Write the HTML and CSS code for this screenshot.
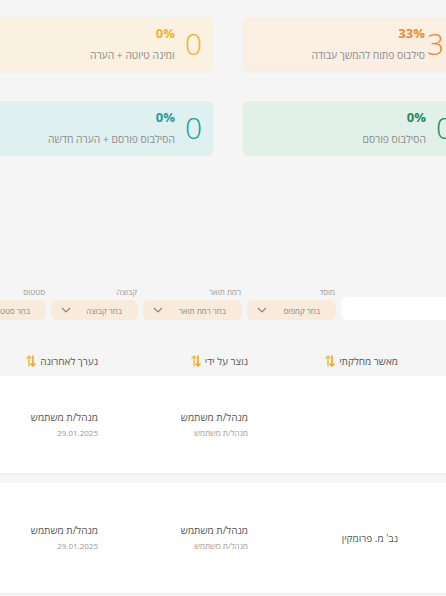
FILE: index.html
```html
<!DOCTYPE html>
<html lang="he" dir="rtl">
<head>
  <meta charset="UTF-8" />
  <meta name="viewport" content="width=device-width, initial-scale=1.0"/>
  <title>סילבוסים</title>
  <link rel="stylesheet" href="styles.css">
</head>
<body>

  <div class="page">

    <!-- Status cards -->
    <div class="cards">
      <div class="card orange">
        <div class="count">3</div>
        <div class="info">
          <div class="percent">33%</div>
          <div class="caption">סילבוס פתוח להמשך עבודה</div>
        </div>
      </div>
      <div class="card amber">
        <div class="count">0</div>
        <div class="info">
          <div class="percent">0%</div>
          <div class="caption">ומינה טיוטה + הערה</div>
        </div>
      </div>
      <div class="card green">
        <div class="count">0</div>
        <div class="info">
          <div class="percent">0%</div>
          <div class="caption">הסילבוס פורסם</div>
        </div>
      </div>
      <div class="card teal">
        <div class="count">0</div>
        <div class="info">
          <div class="percent">0%</div>
          <div class="caption">הסילבוס פורסם + הערה חדשה</div>
        </div>
      </div>
    </div>

    <!-- Filters -->
    <div class="filters">
      <input type="text" class="search" />
      <div class="filter">
        <label>מוסד</label>
        <div class="select w88"><span>בחר קמפוס</span><svg width="10" height="6" viewBox="0 0 10 6"><polyline points="1,1 5,5 9,1" /></svg></div>
      </div>
      <div class="filter">
        <label>רמת תואר</label>
        <div class="select w99"><span>בחר רמת תואר</span><svg width="10" height="6" viewBox="0 0 10 6"><polyline points="1,1 5,5 9,1" /></svg></div>
      </div>
      <div class="filter">
        <label>קבוצה</label>
        <div class="select w87"><span>בחר קבוצה</span><svg width="10" height="6" viewBox="0 0 10 6"><polyline points="1,1 5,5 9,1" /></svg></div>
      </div>
      <div class="filter">
        <label>סטטוס</label>
        <div class="select w87"><span>בחר סטטוס</span><svg width="10" height="6" viewBox="0 0 10 6"><polyline points="1,1 5,5 9,1" /></svg></div>
      </div>
    </div>

    <!-- Syllabus table -->
    <div class="table">
      <div class="thead">
        <div class="th">מאשר מחלקתי <svg class="sort" width="10" height="12" viewBox="0 0 10 12"><path d="M3 11V1M1 3l2-2 2 2" class="up"/><path d="M7 1v10M5 9l2 2 2-2" class="down"/></svg></div>
        <div class="th">נוצר על ידי <svg class="sort" width="10" height="12" viewBox="0 0 10 12"><path d="M3 11V1M1 3l2-2 2 2" class="up"/><path d="M7 1v10M5 9l2 2 2-2" class="down"/></svg></div>
        <div class="th">נערך לאחרונה <svg class="sort" width="10" height="12" viewBox="0 0 10 12"><path d="M3 11V1M1 3l2-2 2 2" class="up"/><path d="M7 1v10M5 9l2 2 2-2" class="down"/></svg></div>
      </div>

      <div class="row short">
        <div class="td"></div>
        <div class="td">
          <div class="main">מנהל/ת משתמש</div>
          <div class="sub">מנהל/ת משתמש</div>
        </div>
        <div class="td">
          <div class="main">מנהל/ת משתמש</div>
          <div class="sub">29.01.2025</div>
        </div>
      </div>

      <div class="row tall">
        <div class="td"><div class="main">נב' מ. פרומקין</div></div>
        <div class="td">
          <div class="main">מנהל/ת משתמש</div>
          <div class="sub">מנהל/ת משתמש</div>
        </div>
        <div class="td">
          <div class="main">מנהל/ת משתמש</div>
          <div class="sub">29.01.2025</div>
        </div>
      </div>
    </div>

  </div>

</body>
</html>
```

FILE: styles.css
```css
html, body {
  margin: 0;
  overflow: hidden;
}
body {
  font-family: "Open Sans", "Liberation Sans", Arial, sans-serif;
  background-color: #f5f5f5;
  color: #555;
}
.page {
  direction: rtl;
  width: 540px;
  margin-right: -40px;
  padding-top: 17px;
}

/* cards */
.cards {
  display: grid;
  grid-template-columns: 221px 221px;
  gap: 30px;
  padding-right: 22px;
}
.card {
  display: flex;
  align-items: center;
  gap: 10px;
  height: 54px;
  padding: 0 11px;
  border-radius: 6px;
  box-shadow: 0 1px 2px rgba(0, 0, 0, 0.04);
}
.count {
  font-size: 30px;
  font-weight: 300;
  line-height: 1;
}
.percent {
  font-size: 13px;
  font-weight: 700;
  line-height: 16px;
  margin-bottom: 6px;
}
.caption {
  font-size: 10.3px;
  line-height: 16px;
  color: #8c8c8c;
}
.orange {
  background-color: #fbeee2;
  padding-right: 20px;
  gap: 2px;
}
.orange .count, .orange .percent { color: #ee8b2c; }
.amber { background-color: #fbf1e1; }
.amber .count, .amber .percent { color: #f2b22d; }
.green { background-color: #e1f0e8; }
.green .count, .green .percent { color: #26895c; }
.teal { background-color: #def0f0; }
.teal .count, .teal .percent { color: #229ca0; }

/* filters */
.filters {
  display: flex;
  align-items: flex-end;
  gap: 5px;
  margin-top: 131px;
  padding-right: 22px;
}
.search {
  width: 123px;
  height: 23px;
  box-sizing: border-box;
  border: none;
  border-radius: 6px;
  background-color: #fff;
}
.filter label {
  display: block;
  font-size: 8px;
  line-height: 12px;
  color: #999;
  margin-bottom: 2px;
  padding-right: 1px;
}
.select {
  display: flex;
  align-items: center;
  justify-content: space-between;
  height: 20px;
  box-sizing: border-box;
  padding: 0 16px 0 10px;
  background-color: #f8ebdb;
  border-radius: 6px;
  font-size: 8px;
  color: #888;
}
.select svg polyline {
  fill: none;
  stroke: #888;
  stroke-width: 1.2;
}
.w88 { width: 89px; }
.w99 { width: 99px; }
.w87 { width: 87px; }

/* table */
.thead, .row {
  display: grid;
  grid-template-columns: 150px 150px 150px;
  padding-right: 76px;
}
.thead {
  height: 56px;
  align-items: end;
}
.th {
  display: flex;
  align-items: center;
  gap: 4px;
  padding: 0 12px 7px 0;
  font-size: 10px;
  line-height: 16px;
  color: #555;
}
.sort path {
  fill: none;
  stroke-width: 1.6;
  stroke-linecap: round;
  stroke-linejoin: round;
}
.sort .up { stroke: #f4c23a; }
.sort .down { stroke: #f0a42a; }
.row {
  background-color: #fff;
  align-items: center;
  margin-bottom: 10px;
  box-shadow: 0 1px 2px rgba(0, 0, 0, 0.04);
}
.short { height: 97px; }
.tall { height: 110px; }
.td {
  padding-right: 12px;
}
.main {
  font-size: 10px;
  line-height: 15px;
  color: #555;
}
.sub {
  font-size: 8px;
  line-height: 15px;
  color: #999;
}
```
